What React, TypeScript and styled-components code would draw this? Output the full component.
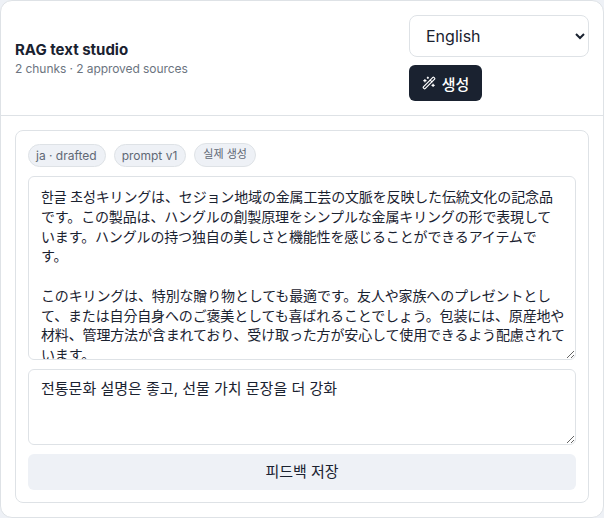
import React, { useState } from "react"
import styled, { createGlobalStyle } from "styled-components"
import { WandSparkles } from "lucide-react"

const FONT = `Inter, "Noto Sans CJK KR", "Noto Sans CJK JP", sans-serif`

const draftText = `한글 초성キリングは、セジョン地域の金属工芸の文脈を反映した伝統文化の記念品
です。この製品は、ハングルの創製原理をシンプルな金属キリングの形で表現して
います。ハングルの持つ独自の美しさと機能性を感じることができるアイテムで
す。

このキリングは、特別な贈り物としても最適です。友人や家族へのプレゼントとし
て、または自分自身へのご褒美としても喜ばれることでしょう。包装には、原産地や
材料、管理方法が含まれており、受け取った方が安心して使用できるよう配慮されて
います。`

const tags = [
  { label: "ja · drafted", korean: false },
  { label: "prompt v1", korean: false },
  { label: "실제 생성", korean: true },
]

const App: React.FC = () => {
  const [draft, setDraft] = useState(draftText)
  const [feedback, setFeedback] = useState(
    "전통문화 설명은 좋고, 선물 가치 문장을 더 강화"
  )

  return (
    <>
      <GlobalStyle />
      <Studio>
        <Header>
          <HeaderText>
            <Title>RAG text studio</Title>
            <Subtitle>2 chunks · 2 approved sources</Subtitle>
          </HeaderText>
          <Controls>
            <LanguageSelect defaultValue="en">
              <option value="en">English</option>
              <option value="ko">한국어</option>
              <option value="ja">日本語</option>
            </LanguageSelect>
            <GenerateButton type="button">
              <WandSparkles size={14} strokeWidth={2} />
              생성
            </GenerateButton>
          </Controls>
        </Header>
        <Body>
          <ResultCard>
            <Tags>
              {tags.map(tag => (
                <Tag key={tag.label} $korean={tag.korean}>
                  {tag.label}
                </Tag>
              ))}
            </Tags>
            <DraftArea
              value={draft}
              onChange={e => setDraft(e.target.value)}
            />
            <FeedbackArea
              value={feedback}
              onChange={e => setFeedback(e.target.value)}
            />
            <SaveButton type="button">피드백 저장</SaveButton>
          </ResultCard>
        </Body>
      </Studio>
    </>
  )
}

export default App

const GlobalStyle = createGlobalStyle`
  * {
    box-sizing: border-box;
  }

  body {
    margin: 0;
    background: #eef1f6;
    font-family: ${FONT};
    color: #1a2230;
  }
`

const Studio = styled.div`
  width: 604px;
  height: 518px;
  background: #ffffff;
  border: 1px solid #dee2e6;
  border-radius: 12px;
  overflow: hidden;
`

const Header = styled.header`
  display: flex;
  justify-content: space-between;
  align-items: center;
  height: 115px;
  padding: 14px;
  border-bottom: 1px solid #dee2e6;
`

const HeaderText = styled.div`
  padding-top: 2px;
`

const Title = styled.h2`
  margin: 0;
  font-size: 15px;
  line-height: 20px;
  font-weight: 700;
  color: #1a2230;
`

const Subtitle = styled.p`
  margin: 0;
  font-size: 12px;
  line-height: 18px;
  letter-spacing: -0.07px;
  color: #6b7480;
`

const Controls = styled.div`
  display: flex;
  flex-direction: column;
  align-items: flex-start;
  gap: 8px;
  width: 180px;
`

const LanguageSelect = styled.select`
  width: 180px;
  height: 42px;
  padding: 0 12px;
  background: #ffffff;
  border: 1px solid #dee2e6;
  border-radius: 8px;
  font-family: ${FONT};
  font-size: 16px;
  color: #1a2230;
`

const GenerateButton = styled.button`
  display: flex;
  align-items: center;
  justify-content: center;
  gap: 6px;
  width: 73px;
  height: 36px;
  padding: 0;
  background: #1a2230;
  border: none;
  border-radius: 6px;
  font-family: ${FONT};
  font-size: 15px;
  font-weight: 500;
  color: #ffffff;
`

const Body = styled.div`
  padding: 14px;
`

const ResultCard = styled.section`
  display: flex;
  flex-direction: column;
  gap: 9px;
  padding: 12px;
  border: 1px solid #dee2e6;
  border-radius: 8px;
`

const Tags = styled.div`
  display: flex;
  align-items: flex-end;
  gap: 8px;
  height: 24px;
`

const Tag = styled.span<{ $korean: boolean }>`
  padding: ${props => (props.$korean ? "3px 8px 4px" : "3px 8px 3px 7px")};
  background: #eef1f6;
  border: 1px solid #dee2e6;
  border-radius: 999px;
  font-size: ${props => (props.$korean ? "11px" : "12px")};
  line-height: 15px;
  color: #5f6875;
`

const TextBox = styled.textarea`
  display: block;
  width: 100%;
  padding: 10px 12px;
  background: #ffffff;
  border: 1px solid #dee2e6;
  border-radius: 6px;
  font-family: ${FONT};
  font-size: 14px;
  line-height: 19.75px;
  letter-spacing: -0.15px;
  color: #1a2230;
  resize: vertical;
  white-space: pre;
  overflow: hidden;
`

const DraftArea = styled(TextBox)`
  height: 184px;
`

const FeedbackArea = styled(TextBox)`
  height: 76px;
  padding-top: 9px;
  font-size: 15px;
  letter-spacing: 0;
`

const SaveButton = styled.button`
  width: 100%;
  height: 36px;
  padding: 0 0 3px;
  background: #eef1f6;
  border: none;
  border-radius: 6px;
  font-family: ${FONT};
  font-size: 15px;
  color: #1a2230;
`
